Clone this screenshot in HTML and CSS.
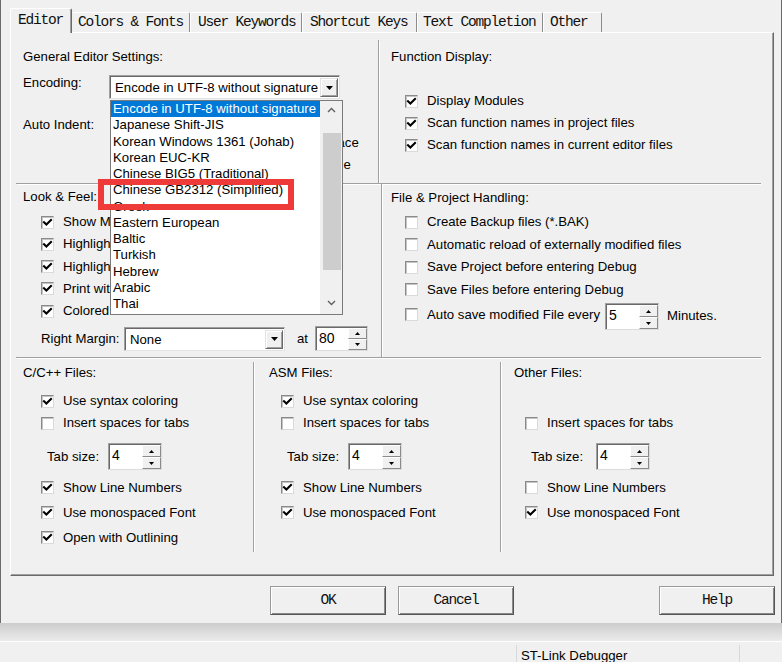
FILE: index.html
```html
<!DOCTYPE html>
<html>
<head>
<meta charset="utf-8">
<title>Configuration</title>
<link rel="stylesheet" href="styles.css">
</head>
<body>
<div class="dialog">
  <div class="tabs">
    <div class="tab active t-editor">Editor</div>
    <div class="tab t-colors">Colors &amp; Fonts</div>
    <div class="tab t-user">User Keywords</div>
    <div class="tab t-short">Shortcut Keys</div>
    <div class="tab t-text">Text Completion</div>
    <div class="tab t-other">Other</div>
  </div>

  <div class="page">
    <div class="row row1">
      <div class="sec sec-general">
        <div class="title">General Editor Settings:</div>
        <div class="enc-row">
          <div class="lbl-enc">Encoding:</div>
          <div class="combo combo-enc">
            <div class="combo-text">Encode in UTF-8 without signature</div>
            <div class="combo-btn"><svg class="tri7" viewBox="0 0 7 4"><path d="M0 0H7L3.5 4Z"/></svg></div>
            <div class="dd-list">
              <div class="dd-items">
                <div class="dd-item sel">Encode in UTF-8 without signature</div>
                <div class="dd-item">Japanese Shift-JIS</div>
                <div class="dd-item">Korean Windows 1361 (Johab)</div>
                <div class="dd-item">Korean EUC-KR</div>
                <div class="dd-item">Chinese BIG5 (Traditional)</div>
                <div class="dd-item">Chinese GB2312 (Simplified)</div>
                <div class="dd-item">Greek</div>
                <div class="dd-item">Eastern European</div>
                <div class="dd-item">Baltic</div>
                <div class="dd-item">Turkish</div>
                <div class="dd-item">Hebrew</div>
                <div class="dd-item">Arabic</div>
                <div class="dd-item">Thai</div>
              </div>
              <div class="dd-sb">
                <div class="sb-arrow"><svg class="chev" viewBox="0 0 9 6"><path d="M1 5L4.5 1.5L8 5"/></svg></div>
                <div class="sb-thumb"></div>
                <div class="sb-arrow sb-down"><svg class="chev" viewBox="0 0 9 6"><path d="M1 1L4.5 4.5L8 1"/></svg></div>
              </div>
            </div>
            <div class="mark"></div>
          </div>
        </div>
        <div class="gen-lower">
          <div class="lbl-indent">Auto Indent:</div>
          <div class="combo combo-indent">
            <div class="combo-text">Smart</div>
            <div class="combo-btn"><svg class="tri7" viewBox="0 0 7 4"><path d="M0 0H7L3.5 4Z"/></svg></div>
          </div>
          <div class="gen-checks">
            <div class="cb-row"><span class="cb"></span><span>Virtual Spaces</span></div>
            <div class="cb-row"><span class="cb"></span><span>View White Space</span></div>
            <div class="cb-row"><span class="cb"></span><span>View End of Line</span></div>
          </div>
        </div>
      </div>

      <div class="sec sec-func">
        <div class="title">Function Display:</div>
        <div class="checks">
          <div class="cb-row"><span class="cb"><svg class="ck" viewBox="0 0 11 11"><path d="M2 5.2L4.4 7.6L9 3"/></svg></span><span>Display Modules</span></div>
          <div class="cb-row"><span class="cb"><svg class="ck" viewBox="0 0 11 11"><path d="M2 5.2L4.4 7.6L9 3"/></svg></span><span>Scan function names in project files</span></div>
          <div class="cb-row"><span class="cb"><svg class="ck" viewBox="0 0 11 11"><path d="M2 5.2L4.4 7.6L9 3"/></svg></span><span>Scan function names in current editor files</span></div>
        </div>
      </div>
    </div>

    <div class="row row2">
      <div class="sec sec-look">
        <div class="title">Look &amp; Feel:</div>
        <div class="checks">
          <div class="cb-row"><span class="cb"><svg class="ck" viewBox="0 0 11 11"><path d="M2 5.2L4.4 7.6L9 3"/></svg></span><span>Show Margin</span></div>
          <div class="cb-row"><span class="cb"><svg class="ck" viewBox="0 0 11 11"><path d="M2 5.2L4.4 7.6L9 3"/></svg></span><span>Highlight Current Line</span></div>
          <div class="cb-row"><span class="cb"><svg class="ck" viewBox="0 0 11 11"><path d="M2 5.2L4.4 7.6L9 3"/></svg></span><span>Highlight matching Braces</span></div>
          <div class="cb-row"><span class="cb"><svg class="ck" viewBox="0 0 11 11"><path d="M2 5.2L4.4 7.6L9 3"/></svg></span><span>Print with syntax coloring</span></div>
          <div class="cb-row"><span class="cb"><svg class="ck" viewBox="0 0 11 11"><path d="M2 5.2L4.4 7.6L9 3"/></svg></span><span>Colored Editor Tabs</span></div>
        </div>
        <div class="margin-row">
          <div class="lbl-margin">Right Margin:</div>
          <div class="combo combo-none">
            <div class="combo-text">None</div>
            <div class="combo-btn"><svg class="tri7" viewBox="0 0 7 4"><path d="M0 0H7L3.5 4Z"/></svg></div>
          </div>
          <div class="lbl-at">at</div>
          <div class="spin spin-80">
            <div class="spin-val">80</div>
            <div class="spin-btns">
              <div class="sp-b"><svg class="tri5" viewBox="0 0 5 3"><path d="M0 3L2.5 0L5 3Z"/></svg></div>
              <div class="sp-b"><svg class="tri5" viewBox="0 0 5 3"><path d="M0 0H5L2.5 3Z"/></svg></div>
            </div>
          </div>
        </div>
      </div>

      <div class="sec sec-file">
        <div class="title">File &amp; Project Handling:</div>
        <div class="checks">
          <div class="cb-row"><span class="cb"></span><span>Create Backup files (*.BAK)</span></div>
          <div class="cb-row"><span class="cb"></span><span>Automatic reload of externally modified files</span></div>
          <div class="cb-row"><span class="cb"></span><span>Save Project before entering Debug</span></div>
          <div class="cb-row"><span class="cb"></span><span>Save Files before entering Debug</span></div>
        </div>
        <div class="autosave">
          <span class="cb"></span>
          <span class="as-lbl">Auto save modified File every</span>
          <div class="spin spin-5">
            <div class="spin-val">5</div>
            <div class="spin-btns">
              <div class="sp-b"><svg class="tri5" viewBox="0 0 5 3"><path d="M0 3L2.5 0L5 3Z"/></svg></div>
              <div class="sp-b"><svg class="tri5" viewBox="0 0 5 3"><path d="M0 0H5L2.5 3Z"/></svg></div>
            </div>
          </div>
          <span class="as-min">Minutes.</span>
        </div>
      </div>
    </div>

    <div class="row row3">
      <div class="col col-c">
        <div class="title">C/C++ Files:</div>
        <div class="checks">
          <div class="cb-row"><span class="cb"><svg class="ck" viewBox="0 0 11 11"><path d="M2 5.2L4.4 7.6L9 3"/></svg></span><span>Use syntax coloring</span></div>
          <div class="cb-row"><span class="cb"></span><span>Insert spaces for tabs</span></div>
        </div>
        <div class="tab-row">
          <div class="lbl-tab">Tab size:</div>
          <div class="spin spin-4">
            <div class="spin-val">4</div>
            <div class="spin-btns">
              <div class="sp-b"><svg class="tri5" viewBox="0 0 5 3"><path d="M0 3L2.5 0L5 3Z"/></svg></div>
              <div class="sp-b"><svg class="tri5" viewBox="0 0 5 3"><path d="M0 0H5L2.5 3Z"/></svg></div>
            </div>
          </div>
        </div>
        <div class="checks2">
          <div class="cb-row"><span class="cb"><svg class="ck" viewBox="0 0 11 11"><path d="M2 5.2L4.4 7.6L9 3"/></svg></span><span>Show Line Numbers</span></div>
          <div class="cb-row"><span class="cb"><svg class="ck" viewBox="0 0 11 11"><path d="M2 5.2L4.4 7.6L9 3"/></svg></span><span>Use monospaced Font</span></div>
          <div class="cb-row"><span class="cb"><svg class="ck" viewBox="0 0 11 11"><path d="M2 5.2L4.4 7.6L9 3"/></svg></span><span>Open with Outlining</span></div>
        </div>
      </div>

      <div class="col col-asm">
        <div class="title">ASM Files:</div>
        <div class="checks">
          <div class="cb-row"><span class="cb"><svg class="ck" viewBox="0 0 11 11"><path d="M2 5.2L4.4 7.6L9 3"/></svg></span><span>Use syntax coloring</span></div>
          <div class="cb-row"><span class="cb"></span><span>Insert spaces for tabs</span></div>
        </div>
        <div class="tab-row">
          <div class="lbl-tab">Tab size:</div>
          <div class="spin spin-4">
            <div class="spin-val">4</div>
            <div class="spin-btns">
              <div class="sp-b"><svg class="tri5" viewBox="0 0 5 3"><path d="M0 3L2.5 0L5 3Z"/></svg></div>
              <div class="sp-b"><svg class="tri5" viewBox="0 0 5 3"><path d="M0 0H5L2.5 3Z"/></svg></div>
            </div>
          </div>
        </div>
        <div class="checks2">
          <div class="cb-row"><span class="cb"><svg class="ck" viewBox="0 0 11 11"><path d="M2 5.2L4.4 7.6L9 3"/></svg></span><span>Show Line Numbers</span></div>
          <div class="cb-row"><span class="cb"><svg class="ck" viewBox="0 0 11 11"><path d="M2 5.2L4.4 7.6L9 3"/></svg></span><span>Use monospaced Font</span></div>
        </div>
      </div>

      <div class="col col-other">
        <div class="title">Other Files:</div>
        <div class="checks">
          <div class="cb-row cb-empty"></div>
          <div class="cb-row"><span class="cb"></span><span>Insert spaces for tabs</span></div>
        </div>
        <div class="tab-row">
          <div class="lbl-tab">Tab size:</div>
          <div class="spin spin-4">
            <div class="spin-val">4</div>
            <div class="spin-btns">
              <div class="sp-b"><svg class="tri5" viewBox="0 0 5 3"><path d="M0 3L2.5 0L5 3Z"/></svg></div>
              <div class="sp-b"><svg class="tri5" viewBox="0 0 5 3"><path d="M0 0H5L2.5 3Z"/></svg></div>
            </div>
          </div>
        </div>
        <div class="checks2">
          <div class="cb-row"><span class="cb"></span><span>Show Line Numbers</span></div>
          <div class="cb-row"><span class="cb"><svg class="ck" viewBox="0 0 11 11"><path d="M2 5.2L4.4 7.6L9 3"/></svg></span><span>Use monospaced Font</span></div>
        </div>
      </div>
    </div>
  </div>

  <div class="buttons">
    <button class="btn">OK</button>
    <button class="btn btn-cancel">Cancel</button>
    <button class="btn">Help</button>
  </div>
</div>
<div class="under-shadow"></div>
<div class="statusbar">
  <div class="sb-cell sb-c1"></div>
  <div class="sb-cell sb-c2">ST-Link Debugger</div>
  <div class="sb-cell sb-c3"></div>
</div>
</body>
</html>
```
FILE: styles.css
```css
* { box-sizing: border-box; }
html, body { margin: 0; padding: 0; }
body {
  width: 782px;
  height: 662px;
  overflow: hidden;
  background: #f0f0f0;
  font-family: "Liberation Sans", Arial, sans-serif;
  font-size: 13.2px;
  line-height: 16px;
  color: #000;
}

.dialog {
  height: 623px;
  border-left: 1px solid #6b6b6b;
  border-right: 1px solid #6b6b6b;
  padding-top: 8px;
  background: #f0f0f0;
}

/* Tabs */
.tabs {
  display: flex;
  height: 25px;
  margin-left: 9px;
  margin-bottom: -1px;
  position: relative;
  z-index: 2;
  font-family: "Liberation Mono", "Courier New", monospace;
  font-size: 14.5px;
  letter-spacing: -1.2px;
}
.tab {
  margin-top: 4px;
  height: 20px;
  line-height: 19px;
  border-top: 1px solid #fff;
  border-left: 1px solid #fff;
  border-right: 1px solid #8c8c8c;
  border-radius: 2px 2px 0 0;
  white-space: nowrap;
  background: #f0f0f0;
  color: #111;
}
.tab.active {
  margin-top: 0;
  height: 25px;
  padding-top: 1px;
  line-height: 21px;
  border-right-color: #696969;
  box-shadow: inset -1px 0 0 #a0a0a0;
}
.t-editor { width: 62px; padding-left: 7px; }
.t-colors { width: 118px; padding-left: 5px; border-left-color: transparent; }
.t-user { width: 112px; padding-left: 7px; }
.t-short { width: 115px; padding-left: 7px; }
.t-text { width: 126px; padding-left: 5px; }
.t-other { width: 59px; padding-left: 6px; }

/* Page */
.page {
  position: relative;
  z-index: 1;
  margin-left: 9px;
  width: 764px;
  height: 544px;
  border: 1px solid;
  border-color: #fff #696969 #696969 #fff;
  box-shadow: inset -1px -1px 0 #a0a0a0;
  padding: 7px 12px 0 5px;
}
.row { display: flex; }
.row1 { height: 144px; }
.row2 { height: 174px; }
.row3 { height: 190px; margin-top: 4px; }

.sec { border-bottom: 1px solid #a0a0a0; }
.sec-general { width: 363px; border-right: 1px solid #a0a0a0; box-shadow: 1px 1px 0 #fff; padding-top: 9px; }
.sec-func { flex: 1; box-shadow: 0 1px 0 #fff; padding-top: 9px; }
.sec-look { width: 366px; border-right: 1px solid #a0a0a0; box-shadow: 1px 1px 0 #fff; padding-top: 5px; }
.sec-file { flex: 1; box-shadow: 0 1px 0 #fff; padding-top: 6px; }

.title { white-space: nowrap; }

/* General editor settings */
.sec-general .title { margin-left: 7px; }
.enc-row { display: flex; margin-top: 10px; margin-left: 7px; }
.lbl-enc { width: 86px; }
.gen-lower { display: flex; margin-top: 11px; margin-left: 7px; }
.lbl-indent { width: 88px; margin-top: 7px; }
.combo-indent { width: 104px; height: 22px; margin-top: 3px; }
.gen-checks { margin-left: 15px; }

/* Function display */
.sec-func .title { margin-left: 12px; }
.sec-func .checks { margin-top: 25px; padding-left: 26px; }

/* Look & feel */
.sec-look .title { margin-left: 7px; }
.sec-look .checks { margin-top: 6px; padding-left: 25px; }
.sec-look .cb-row { height: 22.25px; }
.margin-row { display: flex; align-items: center; margin-top: 4px; padding-left: 25px; }
.lbl-margin { width: 83px; white-space: nowrap; }
.combo-none { width: 161px; height: 24px; }
.lbl-at { margin-left: 12px; }
.spin-80 { margin-left: 7px; width: 53px; height: 25px; }

/* File & project */
.sec-file .title { margin-left: 9px; }
.sec-file .checks { margin-top: 5px; padding-left: 23px; }
.sec-file .cb-row { height: 22.5px; }
.autosave { display: flex; align-items: flex-start; margin-top: 2px; padding-left: 23px; white-space: nowrap; }
.autosave .cb { margin-top: 5px; }
.as-lbl { margin-top: 4px; }
.spin-5 { margin-left: 5px; width: 54px; height: 27px; }
.as-min { margin-left: 8px; margin-top: 5px; }

/* Bottom columns */
.col { height: 100%; padding-top: 3px; }
.col-c { width: 238px; border-right: 1px solid #a0a0a0; box-shadow: 1px 0 0 #fff; padding-left: 25px; }
.col-asm { width: 247px; border-right: 1px solid #a0a0a0; box-shadow: 1px 0 0 #fff; padding-left: 27px; }
.col-other { flex: 1; padding-left: 24px; }
.col-c .title { margin-left: -18px; }
.col-asm .title { margin-left: -12px; }
.col-other .title { margin-left: -11px; }
.col .checks { margin-top: 9px; }
.tab-row { display: flex; align-items: center; margin-top: 9px; height: 27px; }
.lbl-tab { margin-left: 6px; width: 61px; }
.col-other .lbl-tab { width: 65px; }
.spin-4 { width: 54px; height: 27px; }
.checks2 { margin-top: 5px; }
.checks2 .cb-row { height: 25px; }

/* Checkbox */
.cb-row { display: flex; align-items: center; height: 22px; white-space: nowrap; }
.cb-empty { height: 22px; }
.cb {
  flex: none;
  width: 13px;
  height: 13px;
  margin-right: 9px;
  background: #fff;
  border: 1px solid;
  border-color: #8a8a8a #dadada #dadada #8a8a8a;
  box-shadow: inset 1px 1px 0 #c4c4c4;
  display: inline-flex;
}
.ck { width: 11px; height: 11px; display: block; }
.ck path { fill: none; stroke: #000; stroke-width: 2.1; stroke-linecap: square; }

/* Combo box */
.combo {
  display: flex;
  background: #fff;
  border: 1px solid;
  border-color: #a0a0a0 #e3e3e3 #e3e3e3 #a0a0a0;
  box-shadow: inset 1px 1px 0 #696969;
  padding: 2px 1px 1px 2px;
}
.combo-enc { width: 231px; height: 24px; position: relative; }
.combo-text { flex: 1; overflow: hidden; white-space: nowrap; padding-left: 3px; padding-top: 1px; line-height: 17px; }
.combo-btn {
  flex: none;
  width: 18px;
  background: #f0f0f0;
  border: 1px solid;
  border-color: #e3e3e3 #696969 #696969 #e3e3e3;
  box-shadow: inset 1px 1px 0 #fff, inset -1px -1px 0 #a0a0a0;
  display: flex;
  align-items: center;
  justify-content: center;
}
.tri7 { width: 7px; height: 4px; display: block; }
.tri7 path, .tri5 path { fill: #000; }

/* Dropdown list */
.dd-list {
  position: absolute;
  left: 0;
  top: 24px;
  width: 233px;
  height: 215px;
  border: 1px solid #7a7a7a;
  background: #fff;
  display: flex;
  z-index: 10;
}
.dd-items { width: 209px; overflow: hidden; }
.dd-item { height: 16.25px; line-height: 16.25px; padding-left: 2px; white-space: nowrap; overflow: hidden; }
.dd-item.sel { background: #0078d7; color: #fff; }
.dd-sb { flex: 1; background: #f0f0f0; display: flex; flex-direction: column; align-items: center; }
.sb-arrow { width: 100%; height: 18px; display: flex; align-items: center; justify-content: center; }
.sb-down { margin-top: auto; margin-bottom: 2px; }
.chev { width: 9px; height: 6px; display: block; }
.chev path { fill: none; stroke: #606060; stroke-width: 1.4; }
.sb-thumb { width: 18px; height: 137px; background: #cdcdcd; margin-top: 14px; margin-left: 2px; }

/* Red annotation */
.mark {
  position: absolute;
  left: -12px;
  top: 103px;
  width: 196px;
  height: 31px;
  border: 6px solid #ef3a3a;
  z-index: 11;
}

/* Spinner */
.spin {
  display: flex;
  background: #fff;
  border: 1px solid;
  border-color: #a0a0a0 #dcdcdc #dcdcdc #a0a0a0;
  box-shadow: inset 1px 1px 0 #696969;
  padding: 1px 0 0 1px;
}
.spin-val { flex: 1; padding-left: 2px; padding-top: 2px; font-size: 14px; }
.spin-btns { width: 19px; display: flex; flex-direction: column; }
.sp-b {
  flex: 1;
  background: #f0f0f0;
  border: 1px solid;
  border-color: #fff #8a8a8a #8a8a8a #fff;
  display: flex;
  align-items: center;
  justify-content: center;
}
.tri5 { width: 5px; height: 3px; display: block; }

/* Buttons */
.buttons { display: flex; justify-content: flex-end; margin-top: 10px; padding-right: 6px; }
.btn {
  width: 116px;
  height: 29px;
  margin: 0 0 0 12px;
  padding: 0;
  background: #f0f0f0;
  border: 1px solid;
  border-color: #9a9a9a #555 #555 #9a9a9a;
  box-shadow: inset 1px 1px 0 #fff, inset -1px -1px 0 #8a8a8a;
  font-family: "Liberation Mono", "Courier New", monospace;
  font-size: 14.5px;
  letter-spacing: -1.2px;
  line-height: 27px;
  color: #111;
}
.btn-cancel { margin-right: 133px; }

/* Below dialog */
.under-shadow { height: 18px; background: linear-gradient(#cdcdcd, #ebebeb); }
.statusbar { display: flex; height: 21px; border-top: 1px solid #fff; background: #f0f0f0; padding-top: 3px; }
.sb-cell { height: 100%; }
.sb-c1 { width: 517px; border-right: 1px solid #d8d8d8; }
.sb-c2 { width: 223px; border-right: 1px solid #d8d8d8; padding-left: 4px; padding-top: 3px; white-space: nowrap; }
.sb-c3 { flex: 1; }
```
